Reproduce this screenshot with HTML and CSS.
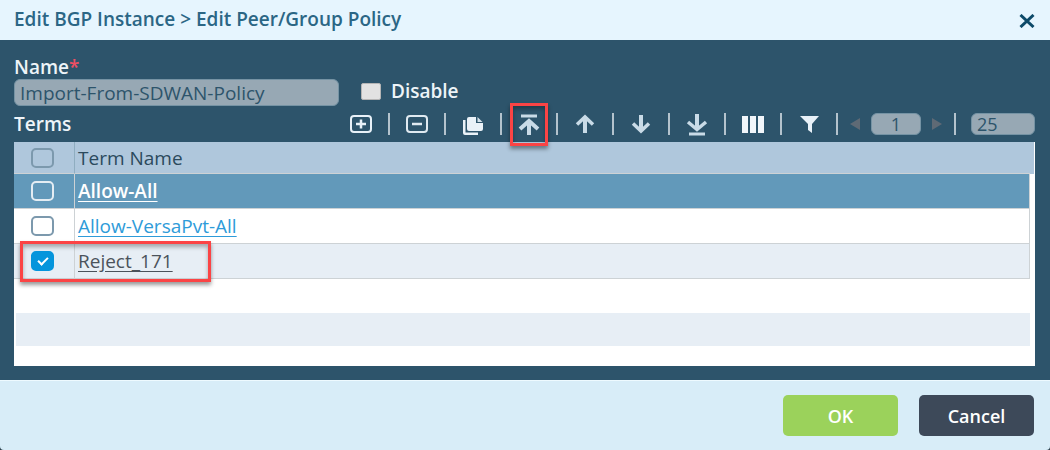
FILE: index.html
```
<!DOCTYPE html>
<html lang="en">
<head>
    <meta charset="UTF-8">
    <meta name="viewport" content="width=device-width, initial-scale=1.0">
    <title>Edit Peer/Group Policy</title>
    <link rel="stylesheet" href="styles.css">
</head>
<body>
    <div class="dialog">
        <header class="dialog-header">
            <h1>Edit BGP Instance &gt; Edit Peer/Group Policy</h1>
            <button class="close" aria-label="Close">
                <svg width="16" height="14" viewBox="0 0 16 14"><path d="M1.500 1 14.500 13M14.500 1 1.500 13" stroke="#0d4a69" stroke-width="3"/></svg>
            </button>
        </header>

        <main class="dialog-body">
            <div class="form-row">
                <div class="field">
                    <label for="name">Name<span class="required">*</span></label>
                    <input type="text" id="name" value="Import-From-SDWAN-Policy" disabled>
                </div>
                <label class="disable"><input type="checkbox"> Disable</label>
            </div>

            <div class="terms-bar">
                <h2>Terms</h2>
                <div class="toolbar">
                    <button class="tool" aria-label="Add">
                        <svg width="24" height="24" viewBox="0 0 24 24" fill="none" stroke="#e8f1f8" stroke-width="2"><rect x="2" y="4" width="20" height="16" rx="3"/><path d="M12 7.500v9M7 12h10" stroke-width="2.500"/></svg>
                    </button>
                    <span class="sep"></span>
                    <button class="tool" aria-label="Delete">
                        <svg width="24" height="24" viewBox="0 0 24 24" fill="none" stroke="#e0eaf1" stroke-width="2"><rect x="2" y="4" width="20" height="16" rx="3"/><path d="M7 12h10" stroke-width="2.500"/></svg>
                    </button>
                    <span class="sep"></span>
                    <button class="tool" aria-label="Clone">
                        <svg width="24" height="24" viewBox="0 0 24 24" fill="#eaf2f8"><path d="M2 8h2.500v12.500H17V23H4q-2 0-2-2z"/><path d="M8 5h7v6h7v6q0 2-2 2H8q-2 0-2-2V7q0-2 2-2z"/><path d="M16.500 5l5 5h-5z" fill="#d3e0e9"/></svg>
                    </button>
                    <span class="sep"></span>
                    <button class="tool marked" aria-label="Move to top">
                        <svg width="24" height="24" viewBox="0 0 24 24" fill="none" stroke="#c9dbe7"><path d="M4 4h16" stroke-width="3"/><path d="M12 10v13" stroke-width="4"/><path d="M3 17l9-8 9 8" stroke-width="4"/></svg>
                    </button>
                    <span class="sep"></span>
                    <button class="tool" aria-label="Move up">
                        <svg width="24" height="24" viewBox="0 0 24 24" fill="none" stroke="#c9dbe7"><path d="M12 5v16" stroke-width="4"/><path d="M4 12.500l8-7.500 8 7.500" stroke-width="3.500"/></svg>
                    </button>
                    <span class="sep"></span>
                    <button class="tool" aria-label="Move down">
                        <svg width="24" height="24" viewBox="0 0 24 24" fill="none" stroke="#c9dbe7"><path d="M12 3v16" stroke-width="4"/><path d="M4 11.500l8 7.500 8-7.500" stroke-width="3.500"/></svg>
                    </button>
                    <span class="sep"></span>
                    <button class="tool" aria-label="Move to bottom">
                        <svg width="24" height="24" viewBox="0 0 24 24" fill="none" stroke="#c9dbe7"><path d="M12 2v15" stroke-width="4"/><path d="M3 10l9 7.500 9-7.500" stroke-width="3.500"/><path d="M4 22h16" stroke-width="3"/></svg>
                    </button>
                    <span class="sep"></span>
                    <button class="tool" aria-label="Columns">
                        <svg width="24" height="24" viewBox="0 0 24 24" fill="#f1f6fa"><path d="M1 4h6v17H1zM9 4h6v17H9zM17 4h6v17h-6z"/></svg>
                    </button>
                    <span class="sep"></span>
                    <button class="tool" aria-label="Filter">
                        <svg width="24" height="24" viewBox="0 0 24 24" fill="#e8f1f8"><path d="M3 4h19l-7 8v9l-4-3v-6z"/></svg>
                    </button>
                    <span class="sep"></span>
                    <div class="pager">
                        <button class="page-arrow" aria-label="Previous page" disabled>
                            <svg width="10" height="14" viewBox="0 0 10 14"><path d="M10 1v12L0 7z" fill="#5f6a75"/></svg>
                        </button>
                        <input type="text" class="page" value="1" aria-label="Page" disabled>
                        <button class="page-arrow" aria-label="Next page" disabled>
                            <svg width="10" height="14" viewBox="0 0 10 14"><path d="M0 1v12l10-6z" fill="#5f6a75"/></svg>
                        </button>
                    </div>
                    <span class="sep"></span>
                    <select class="page-size" aria-label="Rows per page" disabled>
                        <option>25</option>
                    </select>
                </div>
            </div>

            <div class="grid">
                <table>
                    <thead>
                        <tr>
                            <th class="check"><input type="checkbox" aria-label="Select all"></th>
                            <th>Term Name</th>
                        </tr>
                    </thead>
                    <tbody>
                        <tr class="active">
                            <td class="check"><input type="checkbox" aria-label="Select Allow-All"></td>
                            <td><a href="#">Allow-All</a></td>
                        </tr>
                        <tr>
                            <td class="check"><input type="checkbox" aria-label="Select Allow-VersaPvt-All"></td>
                            <td><a href="#">Allow-VersaPvt-All</a></td>
                        </tr>
                        <tr class="selected">
                            <td class="check"><input type="checkbox" aria-label="Select Reject_171" checked></td>
                            <td><a href="#">Reject_171</a></td>
                        </tr>
                    </tbody>
                </table>
                <div class="stripe"></div>
            </div>
        </main>

        <footer class="dialog-footer">
            <button class="btn ok">OK</button>
            <button class="btn cancel">Cancel</button>
        </footer>
    </div>
</body>
</html>
```

FILE: styles.css
```
*, *::before, *::after {
    box-sizing: border-box;
}
body {
    margin: 0;
    background-color: #2f3f48;
    font-family: "Open Sans", "Noto Sans", sans-serif;
    font-size: 19px;
    line-height: 24px;
}
button, input, select {
    font: inherit;
    margin: 0;
}
h1, h2 {
    margin: 0;
    font-size: 19px;
    font-weight: 600;
}
.dialog {
    display: flex;
    flex-direction: column;
    min-height: 100vh;
    background-color: #2d546b;
    border-radius: 0 0 4px 4px;
    overflow: hidden;
}
.dialog-header {
    display: flex;
    align-items: center;
    justify-content: space-between;
    height: 40px;
    padding: 0 15px 3px 14px;
    background-color: #e6f5fe;
}
.dialog-header h1 {
    color: #2b6685;
}
.close {
    display: flex;
    padding: 4px 0 0;
    border: none;
    background: none;
    cursor: pointer;
}
.dialog-body {
    display: flex;
    flex-direction: column;
    flex-grow: 1;
    padding: 15px 15px 14px 14px;
    color: #eef4f8;
    font-weight: 600;
}
.form-row {
    display: flex;
    align-items: flex-end;
    gap: 22px;
}
.field {
    display: flex;
    flex-direction: column;
    width: 325px;
}
.required {
    color: #ef4f63;
}
input:disabled, select:disabled {
    height: 27px;
    padding: 0 5px;
    border: 1px solid #7593a4;
    border-radius: 6px;
    background-color: #97a8b4;
    color: #2d546b;
    font-weight: 400;
    opacity: 1;
}
.disable {
    display: flex;
    align-items: center;
    gap: 10px;
    height: 30px;
}
.disable input {
    appearance: none;
    width: 20px;
    height: 17px;
    border: 1px solid #b5b5b5;
    border-radius: 2px;
    background-color: #e2e2e2;
}
.terms-bar {
    display: flex;
    align-items: center;
    justify-content: space-between;
    height: 36px;
}
.toolbar {
    display: flex;
    align-items: center;
}
.tool {
    display: flex;
    position: relative;
    width: 24px;
    padding: 0;
    border: none;
    background: none;
    cursor: pointer;
}
.marked::after {
    content: "";
    position: absolute;
    inset: -9px -7px -10px;
    border: 3px solid #fb4445;
    box-shadow: 0 3px 4px rgba(0, 0, 0, 0.4), inset 0 3px 4px rgba(0, 0, 0, 0.3);
}
.sep {
    width: 2px;
    height: 22px;
    margin: 0 15px;
    background-color: #b4c3cd;
}
.pager {
    display: flex;
    align-items: center;
    gap: 11px;
    margin: 0 -3px;
}
.page-arrow {
    display: flex;
    padding: 0;
    border: none;
    background: none;
}
input.page, select.page-size {
    height: 22px;
    font-size: 18px;
    line-height: 20px;
}
.page {
    width: 50px;
    text-align: center;
}
.page-size {
    appearance: none;
    width: 64px;
}
.grid {
    flex-grow: 1;
    background-color: #fff;
}
table {
    width: calc(100% - 5px);
    border-collapse: separate;
    border-spacing: 0;
    color: #3b4a54;
    text-align: left;
}
th, td {
    height: 35px;
    padding: 0 3px;
    border: 1px solid #cdd2d5;
    border-width: 0 1px 1px 0;
    font-weight: 400;
}
th {
    height: 32px;
    border-right-color: #8fadc0;
    background-color: #afc7dc;
    color: #2b4a5d;
}
th:last-child {
    border-right: none;
    box-shadow: 4px 0 #afc7dc;
}
.check {
    width: 61px;
}
.check input {
    display: block;
    appearance: none;
    width: 23px;
    height: 20px;
    margin-left: 14px;
    border: 2px solid #7c99ad;
    border-radius: 5px;
}
.check input:checked {
    border-color: #0595dc;
    background-color: #0595dc;
}
.check input:checked::before {
    content: "";
    display: block;
    width: 10px;
    height: 6px;
    margin: 4px 5px;
    border-left: 2px solid #fff;
    border-bottom: 2px solid #fff;
    transform: rotate(-45deg);
}
td a {
    color: #2e9bd9;
    text-underline-offset: 3px;
}
.active {
    background-color: #6299ba;
}
.active a {
    color: #fff;
    font-weight: 600;
}
.active input {
    border-color: #e4edf3;
}
.selected {
    position: relative;
    background-color: #e7eef5;
}
.selected::after {
    content: "";
    position: absolute;
    top: -3px;
    bottom: -3px;
    left: 6px;
    width: 191px;
    border: 3px solid #fb4445;
    box-shadow: 0 3px 4px rgba(0, 0, 0, 0.4), inset 0 3px 4px rgba(0, 0, 0, 0.3);
    pointer-events: none;
}
.selected a {
    color: #4b535b;
}
.stripe {
    height: 33px;
    margin: 34px 5px 20px 2px;
    background-color: #e7eef5;
}
.dialog-footer {
    display: flex;
    justify-content: flex-end;
    gap: 21px;
    padding: 14px 16px;
    border-top: 1px solid #eefaff;
    background-color: #d8edf8;
}
.btn {
    width: 115px;
    height: 41px;
    border: none;
    border-radius: 5px;
    color: #fff;
    font-size: 18px;
    font-weight: 600;
    cursor: pointer;
}
.ok {
    background-color: #9bd25b;
}
.cancel {
    background-color: #3d4959;
}
```
